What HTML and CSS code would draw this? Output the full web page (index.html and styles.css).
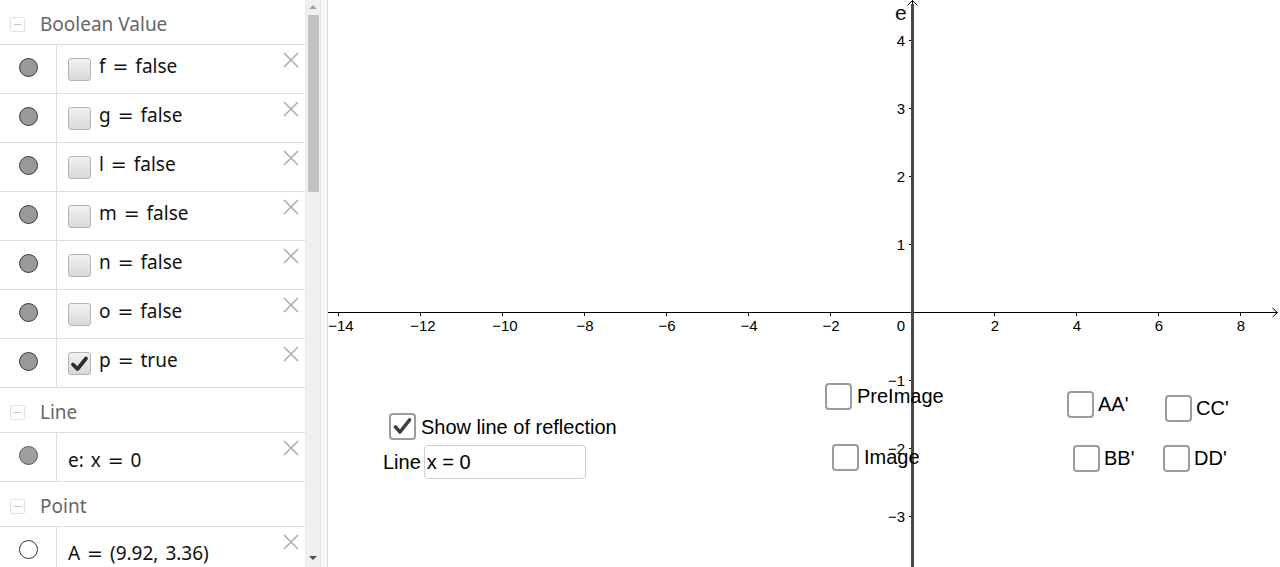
FILE: index.html
```html
<!DOCTYPE html>
<html>
<head>
<meta charset="utf-8">
<link rel="stylesheet" href="styles.css">
</head>
<body>
<div class="app">
  <aside class="algebra">
    <div class="list">
      <div class="group-head"><span class="toggle"></span><span>Boolean Value</span></div>

      <div class="item">
        <div class="marker"><span class="dot"></span></div>
        <div class="content"><span class="cb"></span><span class="expr">f <span class="eq">=</span> false</span></div>
        <svg class="close" width="16" height="16" viewBox="0 0 16 16"><path d="M1 1L15 15M15 1L1 15"/></svg>
      </div>
      <div class="item">
        <div class="marker"><span class="dot"></span></div>
        <div class="content"><span class="cb"></span><span class="expr">g <span class="eq">=</span> false</span></div>
        <svg class="close" width="16" height="16" viewBox="0 0 16 16"><path d="M1 1L15 15M15 1L1 15"/></svg>
      </div>
      <div class="item">
        <div class="marker"><span class="dot"></span></div>
        <div class="content"><span class="cb"></span><span class="expr">l <span class="eq">=</span> false</span></div>
        <svg class="close" width="16" height="16" viewBox="0 0 16 16"><path d="M1 1L15 15M15 1L1 15"/></svg>
      </div>
      <div class="item">
        <div class="marker"><span class="dot"></span></div>
        <div class="content"><span class="cb"></span><span class="expr">m <span class="eq">=</span> false</span></div>
        <svg class="close" width="16" height="16" viewBox="0 0 16 16"><path d="M1 1L15 15M15 1L1 15"/></svg>
      </div>
      <div class="item">
        <div class="marker"><span class="dot"></span></div>
        <div class="content"><span class="cb"></span><span class="expr">n <span class="eq">=</span> false</span></div>
        <svg class="close" width="16" height="16" viewBox="0 0 16 16"><path d="M1 1L15 15M15 1L1 15"/></svg>
      </div>
      <div class="item">
        <div class="marker"><span class="dot"></span></div>
        <div class="content"><span class="cb"></span><span class="expr">o <span class="eq">=</span> false</span></div>
        <svg class="close" width="16" height="16" viewBox="0 0 16 16"><path d="M1 1L15 15M15 1L1 15"/></svg>
      </div>
      <div class="item">
        <div class="marker"><span class="dot"></span></div>
        <div class="content"><span class="cb checked"><svg width="21" height="21" viewBox="0 0 21 21"><path d="M4 11.5L8.5 16L17 5.5"/></svg></span><span class="expr">p <span class="eq">=</span> true</span></div>
        <svg class="close" width="16" height="16" viewBox="0 0 16 16"><path d="M1 1L15 15M15 1L1 15"/></svg>
      </div>

      <div class="group-head"><span class="toggle"></span><span>Line</span></div>
      <div class="item">
        <div class="marker"><span class="dot light"></span></div>
        <div class="content plain"><span class="expr">e: x <span class="eq">=</span> 0</span></div>
        <svg class="close" width="16" height="16" viewBox="0 0 16 16"><path d="M1 1L15 15M15 1L1 15"/></svg>
      </div>

      <div class="group-head"><span class="toggle"></span><span>Point</span></div>
      <div class="item">
        <div class="marker"><span class="dot hollow"></span></div>
        <div class="content plain low"><span class="expr">A <span class="eq">=</span> (9.92, 3.36)</span></div>
        <svg class="close" width="16" height="16" viewBox="0 0 16 16"><path d="M1 1L15 15M15 1L1 15"/></svg>
      </div>
    </div>
    <div class="scrollbar">
      <span class="arrow up"></span>
      <div class="thumb"></div>
      <span class="arrow down"></span>
    </div>
  </aside>
  <div class="splitter"></div>
  <main class="graphics">
    <svg class="plane" width="952" height="567" viewBox="0 0 952 567">
      <g class="axis">
        <line x1="0" y1="312.5" x2="949.5" y2="312.5"/>
        <polyline points="944.5,308 949.5,312.5 944.5,317"/>
        <line x1="584.5" y1="0.5" x2="584.5" y2="567"/>
        <polyline points="579.5,5.5 584.5,0.5 589.5,5.5"/>
        <line x1="10.5" y1="312.5" x2="10.5" y2="316"/>
        <line x1="92.5" y1="312.5" x2="92.5" y2="316"/>
        <line x1="174.5" y1="312.5" x2="174.5" y2="316"/>
        <line x1="256.5" y1="312.5" x2="256.5" y2="316"/>
        <line x1="338.5" y1="312.5" x2="338.5" y2="316"/>
        <line x1="420.5" y1="312.5" x2="420.5" y2="316"/>
        <line x1="502.5" y1="312.5" x2="502.5" y2="316"/>
        <line x1="666.5" y1="312.5" x2="666.5" y2="316"/>
        <line x1="748.5" y1="312.5" x2="748.5" y2="316"/>
        <line x1="830.5" y1="312.5" x2="830.5" y2="316"/>
        <line x1="912.5" y1="312.5" x2="912.5" y2="316"/>
        <line x1="581" y1="40.5" x2="584.5" y2="40.5"/>
        <line x1="581" y1="108.5" x2="584.5" y2="108.5"/>
        <line x1="581" y1="176.5" x2="584.5" y2="176.5"/>
        <line x1="581" y1="244.5" x2="584.5" y2="244.5"/>
        <line x1="581" y1="380.5" x2="584.5" y2="380.5"/>
        <line x1="581" y1="448.5" x2="584.5" y2="448.5"/>
        <line x1="581" y1="516.5" x2="584.5" y2="516.5"/>
      </g>
      <line class="line-e" x1="584.5" y1="4" x2="584.5" y2="567"/>
      <g class="xlabels">
        <text x="13" y="331">−14</text>
        <text x="95" y="331">−12</text>
        <text x="177" y="331">−10</text>
        <text x="257" y="331">−8</text>
        <text x="339" y="331">−6</text>
        <text x="421" y="331">−4</text>
        <text x="503" y="331">−2</text>
        <text x="667" y="331">2</text>
        <text x="749" y="331">4</text>
        <text x="831" y="331">6</text>
        <text x="913" y="331">8</text>
        <text x="573" y="331">0</text>
      </g>
      <g class="ylabels">
        <text x="577" y="46">4</text>
        <text x="577" y="114">3</text>
        <text x="577" y="182">2</text>
        <text x="577" y="250">1</text>
        <text x="577" y="386">−1</text>
        <text x="577" y="454">−2</text>
        <text x="577" y="522">−3</text>
      </g>
      <text class="elabel" x="567" y="20">e</text>
    </svg>

    <label class="widget w-show"><span class="gbox"><svg width="23" height="23" viewBox="0 0 23 23"><path d="M4.5 12L9 17L18.5 5"/></svg></span><span>Show line of reflection</span></label>
    <div class="widget w-line"><span>Line</span><div class="ginput">x = 0</div></div>

    <label class="widget w-pre"><span class="gbox"></span><span>PreImage</span></label>
    <label class="widget w-img"><span class="gbox"></span><span>Image</span></label>
    <label class="widget w-aa"><span class="gbox"></span><span>AA'</span></label>
    <label class="widget w-cc"><span class="gbox"></span><span>CC'</span></label>
    <label class="widget w-bb"><span class="gbox"></span><span>BB'</span></label>
    <label class="widget w-dd"><span class="gbox"></span><span>DD'</span></label>
  </main>
</div>
</body>
</html>
```

FILE: styles.css
```css
* { box-sizing: border-box; }
html, body { margin: 0; padding: 0; }
body {
  background: #fff;
  overflow: hidden;
  font-family: "Noto Sans", "DejaVu Sans", sans-serif;
}
.app {
  display: flex;
  width: 1280px;
  height: 567px;
}

/* ---------- Algebra panel ---------- */
.algebra {
  display: flex;
  flex: none;
  width: 320px;
  height: 567px;
}
.list {
  width: 305px;
  height: 567px;
  overflow: hidden;
}
.group-head {
  height: 45px;
  border-bottom: 1px solid #dedede;
  display: flex;
  align-items: center;
  gap: 15px;
  padding: 4px 0 0 10px;
  font-size: 19px;
  color: #666;
}
.toggle {
  width: 15px;
  height: 15px;
  border: 1px solid #e2e2e2;
  border-radius: 2px;
  display: flex;
  align-items: center;
  justify-content: center;
}
.toggle::before {
  content: "";
  width: 7px;
  height: 1px;
  background: #c4c4c4;
}
.item {
  height: 49px;
  border-bottom: 1px solid #dedede;
  display: flex;
}
.marker {
  width: 57px;
  flex: none;
  border-right: 1px solid #dedede;
  display: flex;
  justify-content: center;
  padding-top: 13px;
}
.dot {
  width: 19px;
  height: 19px;
  border-radius: 50%;
  background: #999;
  border: 1.5px solid #3a3a3a;
}
.dot.light {
  background: #9e9e9e;
  border-color: #5a5a5a;
}
.dot.hollow {
  background: #fff;
  border-color: #333;
}
.content {
  flex: 1;
  display: flex;
  align-items: flex-start;
  gap: 8px;
  padding: 13px 0 0 11px;
}
.content.plain { padding-top: 16px; }
.content.plain.low { padding-top: 15px; }
.cb {
  width: 23px;
  height: 23px;
  flex: none;
  border: 1px solid #b4b4b4;
  border-radius: 3px;
  background: linear-gradient(#f1f1f1, #d9d9d9);
  display: flex;
}
.cb svg path {
  fill: none;
  stroke: #2e2e2e;
  stroke-width: 3.8;
  stroke-linecap: round;
  stroke-linejoin: round;
}
.expr {
  font-size: 19px;
  line-height: 23px;
  color: #111;
  margin-top: -3px;
  white-space: nowrap;
  word-spacing: 2px;
}
.content.plain .expr { margin-top: 0; }
.eq {
  font-family: "DejaVu Sans", sans-serif;
  font-size: 19px;
}
.close {
  flex: none;
  margin: 7px 6px 0 0;
}
.close path {
  stroke: #ababab;
  stroke-width: 1.5;
  fill: none;
}

/* scrollbar */
.scrollbar {
  width: 15px;
  height: 567px;
  background: #f0f0f0;
  border-left: 1px solid #e9e9e9;
  display: flex;
  flex-direction: column;
  align-items: center;
}
.arrow {
  width: 0;
  height: 0;
  border-left: 4px solid transparent;
  border-right: 4px solid transparent;
  flex: none;
}
.arrow.up {
  border-bottom: 4px solid #a3a3a3;
  margin-top: 5px;
}
.arrow.down {
  border-top: 4px solid #505050;
  margin-top: auto;
  margin-bottom: 7px;
}
.thumb {
  width: 11px;
  height: 177px;
  background: #c1c1c1;
  margin-top: 6px;
}
.splitter {
  flex: none;
  width: 8px;
  height: 567px;
  background: #f7f7f7;
  border-left: 1px solid #e3e3e3;
  border-right: 1px solid #d9d9d9;
}

/* ---------- Graphics view ---------- */
.graphics {
  position: relative;
  flex: 1;
  height: 567px;
  overflow: hidden;
  font-family: "Liberation Sans", Arial, sans-serif;
}
.plane {
  position: absolute;
  left: 0;
  top: 0;
}
.axis line, .axis polyline {
  stroke: #000;
  stroke-width: 1;
  fill: none;
}
.line-e {
  stroke: #4b4b3f;
  stroke-width: 3;
}
.xlabels text {
  font-family: "Liberation Sans", Arial, sans-serif;
  font-size: 15px;
  text-anchor: middle;
  fill: #000;
}
.ylabels text {
  font-family: "Liberation Sans", Arial, sans-serif;
  font-size: 15px;
  text-anchor: end;
  fill: #000;
}
.elabel {
  font-family: "Liberation Sans", Arial, sans-serif;
  font-size: 21px;
  fill: #111;
}

.widget {
  position: absolute;
  display: flex;
  align-items: center;
  gap: 5px;
  font-size: 20px;
  color: #000;
  white-space: nowrap;
}
.gbox {
  width: 27px;
  height: 27px;
  flex: none;
  border: 2px solid #9c9c9c;
  border-radius: 4px;
  background: #fff;
  display: flex;
}
.gbox svg path {
  fill: none;
  stroke: #404040;
  stroke-width: 3.6;
  stroke-linecap: round;
  stroke-linejoin: round;
}
.w-show { left: 61px; top: 413px; }
.w-show span:last-child { padding-top: 2px; }
.w-line { left: 55px; top: 445px; gap: 3px; }
.ginput {
  width: 162px;
  height: 34px;
  border: 1px solid #cdcdcd;
  border-radius: 4px;
  padding-left: 2px;
  display: flex;
  align-items: center;
  font-size: 20px;
}
.w-pre { left: 497px; top: 383px; }
.w-img { left: 504px; top: 444px; }
.w-aa { left: 739px; top: 391px; gap: 4px; }
.w-cc { left: 837px; top: 395px; gap: 4px; }
.w-bb { left: 745px; top: 445px; gap: 4px; }
.w-dd { left: 835px; top: 445px; gap: 4px; }
```
